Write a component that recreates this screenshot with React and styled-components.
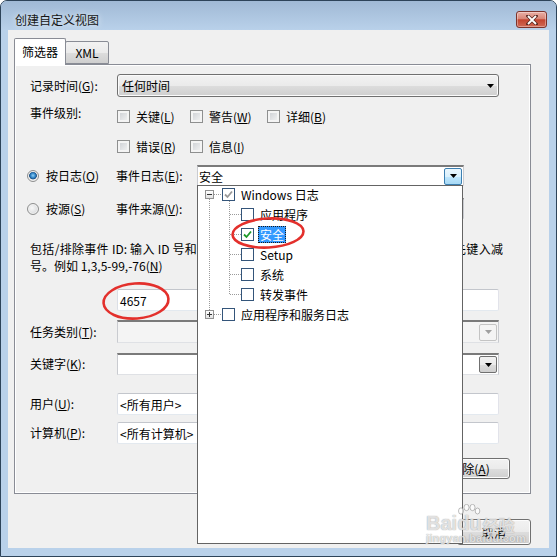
import React from "react";
import styled, { createGlobalStyle } from "styled-components";

const GlobalStyle = createGlobalStyle`
  html, body { margin: 0; padding: 0; background: #ffffff; }
  body {
    font-family: "Noto Sans CJK SC", "Microsoft YaHei", sans-serif;
    font-size: 12px;
    color: #000;
  }
  * { box-sizing: border-box; }
  u { text-decoration-thickness: 1px; text-underline-offset: 1px; }
`;

const Window = styled.div`
  position: relative;
  width: 557px;
  height: 557px;
  border: 1px solid #2d4359;
  border-radius: 7px 7px 0 0;
  background: #b9d1ea;
  display: flex;
  flex-direction: column;
  overflow: hidden;
`;

const TitleBar = styled.div`
  height: 29px;
  flex: none;
  display: flex;
  align-items: center;
  justify-content: space-between;
  padding: 8px 9px 0 14px;
  background: linear-gradient(#a0b9d5, #b9d1ea);
`;

const Title = styled.div`
  font-size: 12px;
  color: #161616;
  text-shadow: 0 0 6px rgba(255, 255, 255, 0.9);
`;

const CloseButton = styled.div`
  width: 31px;
  height: 17px;
  border: 1px solid #7d332b;
  border-radius: 3px;
  background: linear-gradient(#eab0a6, #d98677 45%, #c3442f 52%, #d06a56);
  box-shadow: inset 0 0 0 1px rgba(255, 255, 255, 0.35);
  display: grid;
  place-items: center;
`;

const Client = styled.div`
  flex: 1;
  margin: 0 7px 8px 7px;
  padding: 8px 18px 0 6px;
  background: #f0f0f0;
  display: flex;
  flex-direction: column;
`;

const Tabs = styled.div`
  position: relative;
  z-index: 1;
  height: 26px;
  display: flex;
  align-items: flex-end;
`;

const Tab = styled.div`
  height: ${(p) => (p.$active ? "27px" : "23px")};
  width: ${(p) => (p.$active ? "52px" : "44px")};
  margin-bottom: ${(p) => (p.$active ? "-1px" : "0")};
  margin-left: ${(p) => (p.$active ? "0" : "-1px")};
  border: 1px solid #898c95;
  border-bottom: ${(p) => (p.$active ? "none" : "1px solid #898c95")};
  border-radius: 2px 2px 0 0;
  background: ${(p) => (p.$active ? "#ffffff" : "linear-gradient(#f2f2f2, #ebebeb 50%, #dddddd 51%, #cfcfcf)")};
  position: relative;
  z-index: ${(p) => (p.$active ? 2 : 1)};
  display: flex;
  align-items: center;
  justify-content: center;
  padding-bottom: ${(p) => (p.$active ? "2px" : "0")};
  font-size: 12px;
`;

const Panel = styled.div`
  height: 430px;
  flex: none;
  border: 1px solid #898c95;
  box-shadow: inset 1px 1px 0 #ffffff, inset -1px -1px 0 #ffffff;
  background: #f0f0f0;
  padding: 9px 31px 0 15px;
  display: flex;
  flex-direction: column;
`;

const Row = styled.div`
  display: flex;
  align-items: center;
  height: ${(p) => p.$h || 22}px;
  margin-top: ${(p) => p.$mt || 0}px;
  margin-left: ${(p) => p.$ml || 0}px;
  flex: none;
`;

const Label = styled.div`
  width: ${(p) => p.$w || 87}px;
  flex: none;
  white-space: nowrap;
  line-height: 14px;
`;

const ButtonCombo = styled.div`
  flex: 1;
  height: 100%;
  border: 1px solid #707070;
  border-radius: 3px;
  background: linear-gradient(#f2f2f2, #ebebeb 50%, #dddddd 51%, #cfcfcf);
  box-shadow: inset 0 0 0 1px #fbfbfb;
  display: flex;
  align-items: center;
  justify-content: space-between;
  padding: 0 4px 0 4px;
`;

const Combo = styled.div`
  width: ${(p) => (p.$w ? `${p.$w}px` : "auto")};
  flex: ${(p) => (p.$w ? "none" : "1")};
  height: 100%;
  border: 1px solid;
  border-color: #7a7a7a #c9cbd0 #dfe1e5 #c9cbd0;
  border-top-width: 2px;
  background: ${(p) => (p.$disabled ? "#f4f4f4" : "#ffffff")};
  display: flex;
  align-items: center;
  justify-content: space-between;
  padding: 0 1px 0 1px;
`;

const DropButton = styled.div`
  width: 18px;
  height: 17px;
  border-radius: 2px;
  border: 1px solid ${(p) => (p.$tone === "hot" ? "#3c7fb1" : p.$tone === "off" ? "#c4c4c4" : "#707070")};
  background: ${(p) =>
    p.$tone === "hot"
      ? "linear-gradient(#eaf6fd, #d9f0fc 50%, #bee6fd 51%, #a7d9f5)"
      : p.$tone === "off"
      ? "#f4f4f4"
      : "linear-gradient(#f2f2f2, #ebebeb 50%, #dddddd 51%, #cfcfcf)"};
  display: grid;
  place-items: center;
  flex: none;
`;

const TextBox = styled.div`
  flex: 1;
  height: 100%;
  border: 1px solid;
  border-color: #c3c6cc #e2e3ea #e3e9ef #dbdfe6;
  border-radius: 2px;
  background: #ffffff;
  display: flex;
  align-items: center;
  padding-left: 2px;
  margin-left: ${(p) => p.$ml || 0}px;
`;

const LevelBlock = styled.div`
  display: flex;
  margin-top: 9px;
  flex: none;
`;

const CheckGrid = styled.div`
  display: grid;
  grid-template-columns: 73px 77px auto;
  grid-auto-rows: 20px;
  row-gap: 10px;
`;

const CheckItem = styled.label`
  display: flex;
  align-items: center;
  gap: 6px;
  white-space: nowrap;
`;

const DlgBox = styled.span`
  width: 13px;
  height: 13px;
  flex: none;
  border: 1px solid #8e8f8f;
  background: linear-gradient(135deg, #c9ccd1, #f7f7f7);
  box-shadow: inset 0 0 0 2px #f4f4f4;
`;

const RadioItem = styled.div`
  width: 89px;
  flex: none;
  display: flex;
  align-items: center;
  gap: 7px;
  white-space: nowrap;
`;

const RadioDot = styled.span`
  width: 12px;
  height: 12px;
  flex: none;
  border-radius: 50%;
  border: 1px solid #8e8f8f;
  background: ${(p) =>
    p.$on
      ? "radial-gradient(circle at 50% 45%, #8fd0f7 0, #2b7fc2 2.5px, #1b4d80 3.6px, #e6e6e6 4.2px, #fafafa 100%)"
      : "radial-gradient(circle at 40% 40%, #f8f8f8, #cfd1d4)"};
  box-shadow: inset 0 0 0 1px #f2f2f2;
`;

const Description = styled.div`
  margin-top: 21px;
  width: 473px;
  line-height: 17px;
  flex: none;
`;

const JustLine = styled.div`
  text-align: justify;
  text-align-last: justify;
  white-space: nowrap;
  overflow: hidden;
`;

const PushButton = styled.div`
  width: ${(p) => p.$w}px;
  height: ${(p) => p.$h}px;
  flex: none;
  border: 1px solid #707070;
  border-radius: 3px;
  background: linear-gradient(#f2f2f2, #ebebeb 50%, #dddddd 51%, #cfcfcf);
  box-shadow: inset 0 0 0 1px #fcfcfc;
  display: flex;
  align-items: center;
  justify-content: center;
  align-self: flex-end;
  margin-top: ${(p) => p.$mt || 0}px;
  margin-right: ${(p) => p.$mr || 0}px;
`;

const Footer = styled.div`
  display: flex;
  justify-content: flex-end;
  margin-top: 25px;
`;

const Popup = styled.div`
  position: absolute;
  left: 196px;
  top: 184px;
  width: 266px;
  height: 359px;
  border: 1px solid #646464;
  background: #ffffff;
  z-index: 5;
`;

const Tree = styled.div`
  position: relative;
  margin-top: -2px;
`;

const TreeLines = styled.svg`
  position: absolute;
  left: 0;
  top: 0;
  pointer-events: none;
`;

const TreeRow = styled.div`
  position: relative;
  height: 20px;
  display: flex;
  align-items: center;
  padding-left: ${(p) => p.$indent}px;
  white-space: nowrap;
`;

const Expander = styled.span`
  width: 9px;
  height: 9px;
  margin-left: -17px;
  margin-right: 8px;
  border: 1px solid #919191;
  background: linear-gradient(#ffffff, #e2e2e2);
  display: grid;
  place-items: center;
  flex: none;
`;

const TreeBox = styled.span`
  width: 13px;
  height: 13px;
  flex: none;
  border: 1px solid #34557a;
  background: #ffffff;
  display: grid;
  place-items: center;
  margin-right: 6px;
`;

const Selected = styled.span`
  margin-left: -2px;
  padding: 0 2px;
  line-height: 17px;
  background: #3399ff;
  color: #ffffff;
  outline: 1px dotted #1a1a1a;
  outline-offset: -1px;
`;

const Mark = styled.svg`
  position: absolute;
  pointer-events: none;
  z-index: 8;
  left: ${(p) => p.$x}px;
  top: ${(p) => p.$y}px;
`;

const Watermark = styled.div`
  position: absolute;
  left: 425px;
  top: 512px;
  z-index: 9;
  display: flex;
  flex-direction: column;
  color: rgba(255, 255, 255, 0.7);
  text-shadow: 0 0 1px rgba(110, 110, 110, 0.45), 0 0 1px rgba(110, 110, 110, 0.45);
  pointer-events: none;
`;

const MarkLine = styled.div`
  display: flex;
  align-items: flex-end;
  font-family: "Liberation Sans", Arial, sans-serif;
  font-weight: bold;
  font-size: ${(p) => p.$size}px;
  line-height: 1;
  letter-spacing: ${(p) => p.$ls || 0}px;
`;

const DuPart = styled.span`
  position: relative;
`;

const Paw = styled.svg`
  position: absolute;
  left: 0;
  top: -9px;
`;

const MarkCjk = styled.span`
  font-family: "Noto Sans CJK SC", sans-serif;
  font-size: 16px;
  margin-left: 1px;
`;

const Arrow = ({ color = "#000" }) => (
  <svg width="7" height="4" viewBox="0 0 7 4">
    <polygon points="0,0 7,0 3.5,4" fill={color} />
  </svg>
);

const Tick = ({ color }) => (
  <svg width="11" height="11" viewBox="0 0 11 11">
    <path d="M2 5.5 L4.5 8 L9 2.5" fill="none" stroke={color} strokeWidth="1.8" />
  </svg>
);

const Sign = ({ plus }) => (
  <svg width="7" height="7" viewBox="0 0 7 7">
    <line x1="1" y1="3.5" x2="6" y2="3.5" stroke="#333" strokeWidth="1" />
    {plus && <line x1="3.5" y1="1" x2="3.5" y2="6" stroke="#333" strokeWidth="1" />}
  </svg>
);

const Check = ({ children }) => (
  <CheckItem>
    <DlgBox />
    <span>{children}</span>
  </CheckItem>
);

const children = ["应用程序", "安全", "Setup", "系统", "转发事件"];

export default function App() {
  return (
    <>
      <GlobalStyle />
      <Window>
        <TitleBar>
          <Title>创建自定义视图</Title>
          <CloseButton>
            <svg width="12" height="10" viewBox="0 0 12 10">
              <path d="M2 1 L10 9 M10 1 L2 9" stroke="#5a2a22" strokeWidth="3.4" strokeLinecap="square" />
              <path d="M2 1 L10 9 M10 1 L2 9" stroke="#ffffff" strokeWidth="1.8" />
            </svg>
          </CloseButton>
        </TitleBar>

        <Client>
          <Tabs>
            <Tab $active>筛选器</Tab>
            <Tab>XML</Tab>
          </Tabs>

          <Panel>
            <Row $h={23}>
              <Label>记录时间(<u>G</u>):</Label>
              <ButtonCombo>
                <span>任何时间</span>
                <Arrow />
              </ButtonCombo>
            </Row>

            <LevelBlock>
              <Label>事件级别:</Label>
              <CheckGrid>
                <Check>关键(<u>L</u>)</Check>
                <Check>警告(<u>W</u>)</Check>
                <Check>详细(<u>B</u>)</Check>
                <Check>错误(<u>R</u>)</Check>
                <Check>信息(<u>I</u>)</Check>
              </CheckGrid>
            </LevelBlock>

            <Row $h={21} $mt={9} $ml={-3}>
              <RadioItem>
                <RadioDot $on />
                <span>按日志(<u>O</u>)</span>
              </RadioItem>
              <Label $w={81}>事件日志(<u>E</u>):</Label>
              <Combo $w={267}>
                <span>安全</span>
                <DropButton $tone="hot">
                  <Arrow />
                </DropButton>
              </Combo>
            </Row>

            <Row $h={21} $mt={12} $ml={-3}>
              <RadioItem>
                <RadioDot />
                <span>按源(<u>S</u>)</span>
              </RadioItem>
              <Label $w={81}>事件来源(<u>V</u>):</Label>
              <Combo $w={267} $disabled>
                <span />
                <DropButton $tone="off">
                  <Arrow color="#a0a0a0" />
                </DropButton>
              </Combo>
            </Row>

            <Description>
              <JustLine>包括/排除事件 ID: 输入 ID 号和/或 ID 范围，使用逗号分隔。若要排除条件，请先键入减</JustLine>
              <div>号。例如 1,3,5-99,-76(<u>N</u>)</div>
            </Description>

            <Row $h={22} $mt={15}>
              <TextBox $ml={87}>4657</TextBox>
            </Row>

            <Row $h={23} $mt={9}>
              <Label>任务类别(<u>T</u>):</Label>
              <Combo $disabled>
                <span />
                <DropButton $tone="off">
                  <Arrow color="#a0a0a0" />
                </DropButton>
              </Combo>
            </Row>

            <Row $h={22} $mt={10}>
              <Label>关键字(<u>K</u>):</Label>
              <Combo>
                <span />
                <DropButton>
                  <Arrow />
                </DropButton>
              </Combo>
            </Row>

            <Row $h={22} $mt={18}>
              <Label>用户(<u>U</u>):</Label>
              <TextBox>&lt;所有用户&gt;</TextBox>
            </Row>

            <Row $h={22} $mt={7}>
              <Label>计算机(<u>P</u>):</Label>
              <TextBox>&lt;所有计算机&gt;</TextBox>
            </Row>

            <PushButton $w={80} $h={21} $mt={14} $mr={-11}>
              清除(<u>A</u>)
            </PushButton>
          </Panel>

          <Footer>
            <PushButton $w={74} $h={26}>取消</PushButton>
          </Footer>
        </Client>

        <Popup>
          <Tree>
            <TreeLines width="120" height="140" viewBox="0 0 120 140">
              <g stroke="#9a9a9a" strokeWidth="1" strokeDasharray="1 1" fill="none">
                <line x1="11.5" y1="15" x2="11.5" y2="126" />
                <line x1="16" y1="10.5" x2="24" y2="10.5" />
                <line x1="16" y1="130.5" x2="24" y2="130.5" />
                <line x1="31.5" y1="17" x2="31.5" y2="111" />
                {[30.5, 50.5, 70.5, 90.5, 110.5].map((y) => (
                  <line key={y} x1="32" y1={y} x2="43" y2={y} />
                ))}
              </g>
            </TreeLines>

            <TreeRow $indent={24}>
              <Expander>
                <Sign />
              </Expander>
              <TreeBox>
                <Tick color="#9a9a9a" />
              </TreeBox>
              <span>Windows 日志</span>
            </TreeRow>

            {children.map((name) => (
              <TreeRow key={name} $indent={43}>
                <TreeBox>{name === "安全" && <Tick color="#1f9a2b" />}</TreeBox>
                {name === "安全" ? <Selected>{name}</Selected> : <span>{name}</span>}
              </TreeRow>
            ))}

            <TreeRow $indent={24}>
              <Expander>
                <Sign plus />
              </Expander>
              <TreeBox />
              <span>应用程序和服务日志</span>
            </TreeRow>
          </Tree>
        </Popup>

        <Mark $x={229} $y={215} width="76" height="34" viewBox="0 0 76 34">
          <ellipse cx="38" cy="17" rx="35.5" ry="14.5" fill="none" stroke="#e3302c" strokeWidth="2.6" transform="rotate(-3 38 17)" />
        </Mark>
        <Mark $x={99} $y={279} width="72" height="42" viewBox="0 0 72 42">
          <ellipse cx="36" cy="21" rx="32.5" ry="17.5" fill="none" stroke="#e3302c" strokeWidth="2.6" transform="rotate(-4 36 21)" />
        </Mark>

        <Watermark>
          <MarkLine $size={20}>
            Bai
            <DuPart>
              <Paw width="24" height="14" viewBox="0 0 24 14">
                <g fill="rgba(255,255,255,0.7)" stroke="rgba(110,110,110,0.45)" strokeWidth="1">
                  <ellipse cx="4" cy="7" rx="2.5" ry="3.2" />
                  <ellipse cx="9.5" cy="3.5" rx="2.5" ry="3.2" />
                  <ellipse cx="15.5" cy="3.5" rx="2.5" ry="3.2" />
                  <ellipse cx="20.5" cy="7" rx="2.3" ry="3" />
                </g>
              </Paw>
              du
            </DuPart>
            <MarkCjk>经验</MarkCjk>
          </MarkLine>
          <MarkLine $size={11} $ls={0.2}>jingyan.baidu.com</MarkLine>
        </Watermark>
      </Window>
    </>
  );
}
